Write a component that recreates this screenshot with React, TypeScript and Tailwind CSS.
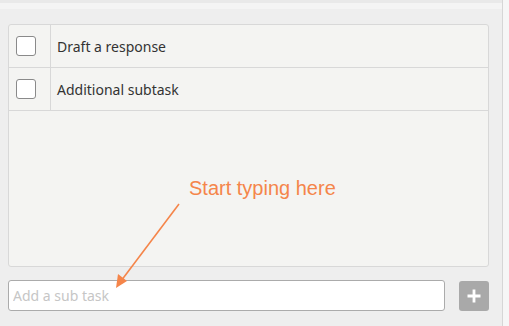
const tasks = ["Draft a response", "Additional subtask"];

export default function App() {
  return (
    <div className="flex w-[509px] h-[326px] overflow-hidden" style={{ fontFamily: '"Noto Sans", sans-serif' }}>
      <div className="flex flex-col w-[503px] bg-[#eeeeee] border-r border-[#d6d6d6]">
        <div className="h-[3px] bg-[#e9e9e9]" />
        <div className="h-[6px] bg-[#f4f4f4]" />
        <div className="relative flex flex-col pl-2 pr-[13px] pt-[15px]">
          <div className="flex flex-col h-[243px] bg-[#f4f4f2] border border-[#d8d8d8] rounded-[3px]">
            {tasks.map((t) => (
              <div key={t} className="flex h-[43px] border-b border-[#d8d8d8]">
                <div className="flex items-center pl-[7px] w-[42px] border-r border-[#d8d8d8]">
                  <span className="block w-[20px] h-[20px] bg-white border border-[#8a8a8a] rounded-[3px]" />
                </div>
                <div className="flex items-center pl-[6px] text-[14px] text-[#333333]">{t}</div>
              </div>
            ))}
          </div>
          <div className="flex items-center gap-[14px] mt-[13px]">
            <input
              className="w-[437px] h-[31px] bg-white border border-[#ababab] rounded-[3px] px-[4px] text-[14px] text-[#333] placeholder:text-[#c6c6c6] outline-none"
              placeholder="Add a sub task"
            />
            <button className="flex items-center justify-center w-[30px] h-[30px] bg-[#a9a9a9] rounded-[3px]">
              <svg width="16" height="16" viewBox="0 0 16 16">
                <path d="M8 1.5v13M1.5 8h13" stroke="white" strokeWidth="2.8" />
              </svg>
            </button>
          </div>
          <div
            className="absolute left-[189px] top-[167px] text-[20px] leading-[24px] text-[#f5854a]"
            style={{ fontFamily: '"Liberation Sans", Arial, sans-serif' }}
          >
            Start typing here
          </div>
          <svg className="absolute left-0 top-0 pointer-events-none" width="503" height="317" viewBox="0 0 503 317">
            <g transform="translate(0,-9)">
              <line x1="179" y1="204" x2="121" y2="281" stroke="#f5854a" strokeWidth="1.6" />
              <path d="M116 288 L118 274 L127 281 Z" fill="#f5854a" />
            </g>
          </svg>
        </div>
      </div>
      <div className="flex-1 bg-[#f6f6f6]" />
    </div>
  );
}
